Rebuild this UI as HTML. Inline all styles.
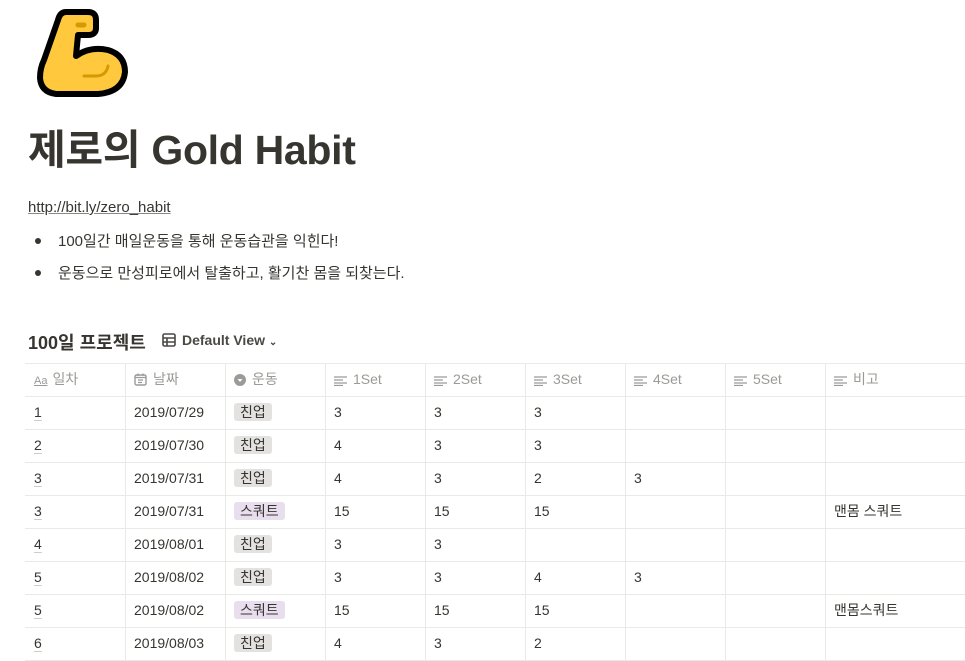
<!DOCTYPE html>
<html><head><meta charset="utf-8"><style>
*{margin:0;padding:0;box-sizing:border-box}
body{width:965px;height:661px;overflow:hidden;background:#fff;color:#37352f;font-family:"Liberation Sans","Noto Sans CJK KR",sans-serif;position:relative}
.abs{position:absolute}
h1{position:absolute;left:28px;top:123px;font-size:41px;font-weight:700;letter-spacing:-0.3px;line-height:54px;white-space:nowrap}
.link{left:28px;top:199px;font-size:15px;text-decoration:underline;color:#37352f;text-decoration-color:#888}
.bul{left:58px;font-size:15px;white-space:nowrap}
.dot{position:absolute;left:35px;width:6px;height:6px;border-radius:3px;background:#37352f}
.tt{left:28px;top:329px;font-size:18px;font-weight:700}
.dv{left:162px;top:332px;font-size:14px;font-weight:700;color:#4a4843}
.hl{position:absolute;left:25px;width:940px;height:1px;background:#e9e9e7}
.vl{position:absolute;top:363px;width:1px;height:298px;background:#e9e9e7}
.cell{position:absolute;font-size:14px;line-height:33px;white-space:nowrap}
.hd{color:#9b9a97}
.tag{display:inline-block;line-height:18px;padding:0 6px;border-radius:3px;font-size:14px;background:#e3e2e0}
.tag.p{background:#e8deee}
.num{text-decoration:underline;text-decoration-color:#ccc;text-underline-offset:3px}
svg.ic{vertical-align:-2px;margin-right:6px}
</style></head><body>
<svg class="abs" style="left:36px;top:8px" width="94" height="90" viewBox="0 0 94 90">
<path d="M30 4 H52 Q60 4 60 12 V20 Q60 27 52 27 H42 L40 48 Q54 38 72 42 Q89 47 89 64 Q87 84 62 86 H20 Q5 84 4 70 Q4 60 8 52 L22 12 Q24 4 30 4 Z" fill="#ffc83d" stroke="#000" stroke-width="6" stroke-linejoin="round"/>
<path d="M48 17 H42" stroke="#d69a00" stroke-width="5" stroke-linecap="round"/>
<path d="M48 68 H60 Q70 68 72 58" stroke="#d69a00" stroke-width="3" fill="none" stroke-linecap="round"/>
</svg>
<h1>제로의 Gold Habit</h1>
<div class="abs link">http://bit.ly/zero_habit</div>
<div class="dot" style="top:238px"></div><div class="abs bul" style="top:230px">100일간 매일운동을 통해 운동습관을 익힌다!</div>
<div class="dot" style="top:270px"></div><div class="abs bul" style="top:262px">운동으로 만성피로에서 탈출하고, 활기찬 몸을 되찾는다.</div>
<div class="abs tt">100일 프로젝트</div>
<div class="abs dv"><svg class="ic" width="14" height="14" viewBox="0 0 14 14"><rect x="1" y="1" width="12" height="12" rx="1.5" fill="none" stroke="#4a4843" stroke-width="1.6"/><path d="M1 5H13M1 9H13M5 5V13" stroke="#4a4843" stroke-width="1.6"/></svg>Default View <span style="font-size:10px">&#8964;</span></div>
<div class="hl" style="top:363px"></div>
<div class="hl" style="top:396px"></div>
<div class="hl" style="top:429px"></div>
<div class="hl" style="top:462px"></div>
<div class="hl" style="top:495px"></div>
<div class="hl" style="top:528px"></div>
<div class="hl" style="top:561px"></div>
<div class="hl" style="top:594px"></div>
<div class="hl" style="top:627px"></div>
<div class="hl" style="top:660px"></div>
<div class="vl" style="left:125px"></div><div class="vl" style="left:225px"></div><div class="vl" style="left:325px"></div><div class="vl" style="left:425px"></div><div class="vl" style="left:525px"></div><div class="vl" style="left:625px"></div><div class="vl" style="left:725px"></div><div class="vl" style="left:825px"></div>
<div class="cell hd" style="left:34px;top:363px"><span style="font-size:11px;text-decoration:underline;margin-right:5px">Aa</span>일차</div>
<div class="cell hd" style="left:134px;top:363px"><svg class="ic" width="13" height="13" viewBox="0 0 13 13"><rect x="1" y="2" width="11" height="10" rx="1.5" fill="none" stroke="#9b9a97" stroke-width="1.4"/><path d="M1 4.5H12M4 7H9M4 9.5H8M4 0.5V3M9 0.5V3" stroke="#9b9a97" stroke-width="1.3"/></svg>날짜</div>
<div class="cell hd" style="left:234px;top:363px"><svg class="ic" width="12" height="12" viewBox="0 0 12 12"><circle cx="6" cy="6" r="6" fill="#9b9a97"/><path d="M3.5 5L6 8L8.5 5Z" fill="#fff"/></svg>운동</div>
<div class="cell hd" style="left:334px;top:363px"><svg class="ic" width="13" height="10" viewBox="0 0 13 10"><path d="M0 1H13M0 4H9M0 7H13M0 9.5H9" stroke="#9b9a97" stroke-width="1.3"/></svg>1Set</div>
<div class="cell hd" style="left:434px;top:363px"><svg class="ic" width="13" height="10" viewBox="0 0 13 10"><path d="M0 1H13M0 4H9M0 7H13M0 9.5H9" stroke="#9b9a97" stroke-width="1.3"/></svg>2Set</div>
<div class="cell hd" style="left:534px;top:363px"><svg class="ic" width="13" height="10" viewBox="0 0 13 10"><path d="M0 1H13M0 4H9M0 7H13M0 9.5H9" stroke="#9b9a97" stroke-width="1.3"/></svg>3Set</div>
<div class="cell hd" style="left:634px;top:363px"><svg class="ic" width="13" height="10" viewBox="0 0 13 10"><path d="M0 1H13M0 4H9M0 7H13M0 9.5H9" stroke="#9b9a97" stroke-width="1.3"/></svg>4Set</div>
<div class="cell hd" style="left:734px;top:363px"><svg class="ic" width="13" height="10" viewBox="0 0 13 10"><path d="M0 1H13M0 4H9M0 7H13M0 9.5H9" stroke="#9b9a97" stroke-width="1.3"/></svg>5Set</div>
<div class="cell hd" style="left:834px;top:363px"><svg class="ic" width="13" height="10" viewBox="0 0 13 10"><path d="M0 1H13M0 4H9M0 7H13M0 9.5H9" stroke="#9b9a97" stroke-width="1.3"/></svg>비고</div>
<div class="cell" style="left:34px;top:396px"><span class="num">1</span></div><div class="cell" style="left:134px;top:396px">2019/07/29</div><div class="cell" style="left:234px;top:396px"><span class="tag">친업</span></div><div class="cell" style="left:334px;top:396px">3</div><div class="cell" style="left:434px;top:396px">3</div><div class="cell" style="left:534px;top:396px">3</div>
<div class="cell" style="left:34px;top:429px"><span class="num">2</span></div><div class="cell" style="left:134px;top:429px">2019/07/30</div><div class="cell" style="left:234px;top:429px"><span class="tag">친업</span></div><div class="cell" style="left:334px;top:429px">4</div><div class="cell" style="left:434px;top:429px">3</div><div class="cell" style="left:534px;top:429px">3</div>
<div class="cell" style="left:34px;top:462px"><span class="num">3</span></div><div class="cell" style="left:134px;top:462px">2019/07/31</div><div class="cell" style="left:234px;top:462px"><span class="tag">친업</span></div><div class="cell" style="left:334px;top:462px">4</div><div class="cell" style="left:434px;top:462px">3</div><div class="cell" style="left:534px;top:462px">2</div><div class="cell" style="left:634px;top:462px">3</div>
<div class="cell" style="left:34px;top:495px"><span class="num">3</span></div><div class="cell" style="left:134px;top:495px">2019/07/31</div><div class="cell" style="left:234px;top:495px"><span class="tag p">스쿼트</span></div><div class="cell" style="left:334px;top:495px">15</div><div class="cell" style="left:434px;top:495px">15</div><div class="cell" style="left:534px;top:495px">15</div><div class="cell" style="left:834px;top:495px">맨몸 스쿼트</div>
<div class="cell" style="left:34px;top:528px"><span class="num">4</span></div><div class="cell" style="left:134px;top:528px">2019/08/01</div><div class="cell" style="left:234px;top:528px"><span class="tag">친업</span></div><div class="cell" style="left:334px;top:528px">3</div><div class="cell" style="left:434px;top:528px">3</div>
<div class="cell" style="left:34px;top:561px"><span class="num">5</span></div><div class="cell" style="left:134px;top:561px">2019/08/02</div><div class="cell" style="left:234px;top:561px"><span class="tag">친업</span></div><div class="cell" style="left:334px;top:561px">3</div><div class="cell" style="left:434px;top:561px">3</div><div class="cell" style="left:534px;top:561px">4</div><div class="cell" style="left:634px;top:561px">3</div>
<div class="cell" style="left:34px;top:594px"><span class="num">5</span></div><div class="cell" style="left:134px;top:594px">2019/08/02</div><div class="cell" style="left:234px;top:594px"><span class="tag p">스쿼트</span></div><div class="cell" style="left:334px;top:594px">15</div><div class="cell" style="left:434px;top:594px">15</div><div class="cell" style="left:534px;top:594px">15</div><div class="cell" style="left:834px;top:594px">맨몸스쿼트</div>
<div class="cell" style="left:34px;top:627px"><span class="num">6</span></div><div class="cell" style="left:134px;top:627px">2019/08/03</div><div class="cell" style="left:234px;top:627px"><span class="tag">친업</span></div><div class="cell" style="left:334px;top:627px">4</div><div class="cell" style="left:434px;top:627px">3</div><div class="cell" style="left:534px;top:627px">2</div>
</body></html>
